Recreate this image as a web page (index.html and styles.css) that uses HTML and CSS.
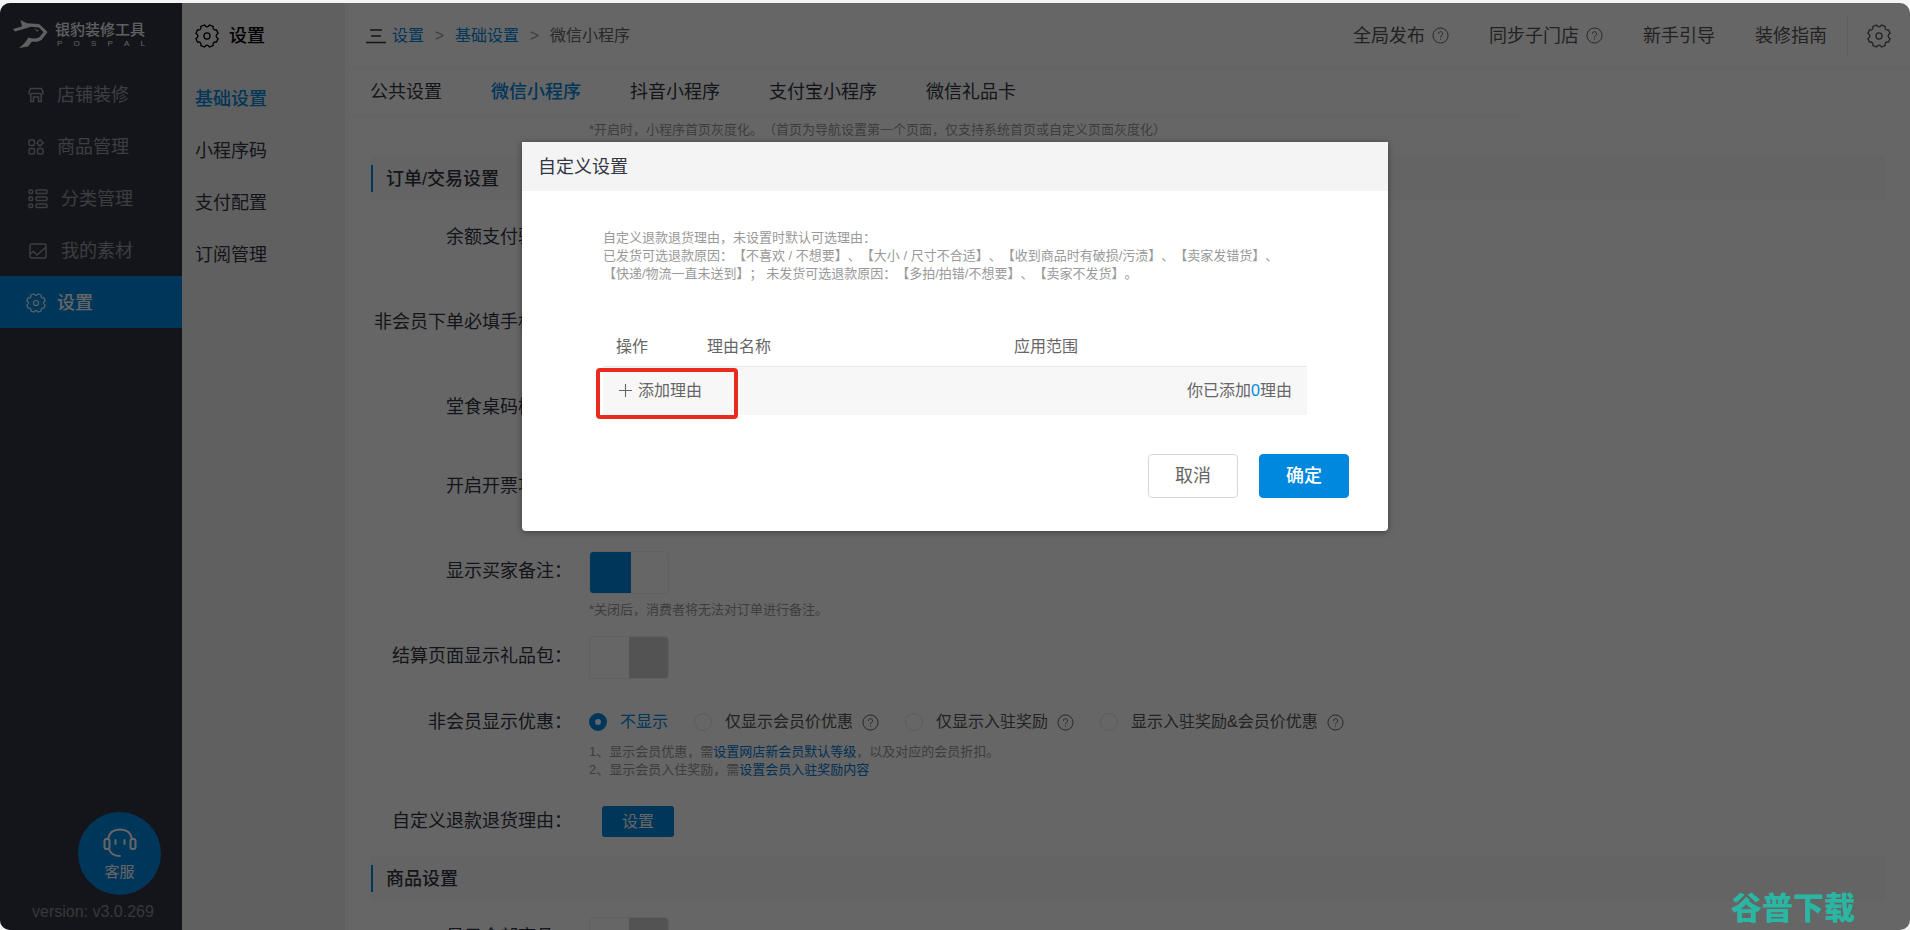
FILE: index.html
```html
<!DOCTYPE html>
<html lang="zh-CN">
<head>
<meta charset="utf-8">
<title>银豹装修工具 - 设置</title>
<link rel="stylesheet" href="styles.css">
</head>
<body>
<svg class="sprite" aria-hidden="true">
  <symbol id="gear" viewBox="1 1 22 22">
    <path d="M9.600 1.900 Q12 5.400 14.400 1.900 L17.600 3.200 Q16.900 7.100 20.800 6.400 L22.100 9.600 Q18.600 12 22.100 14.400 L20.800 17.600 Q16.900 16.900 17.600 20.800 L14.400 22.100 Q12 18.600 9.600 22.100 L6.400 20.800 Q7.100 16.900 3.200 17.600 L1.900 14.400 Q5.400 12 1.900 9.600 L3.200 6.400 Q7.100 7.100 6.400 3.200 Z"/>
    <circle cx="12" cy="12" r="2.800"/>
  </symbol>
  <symbol id="help" viewBox="0 0 18 18">
    <circle cx="9" cy="9" r="8"/>
    <path d="M6.800 7.200a2.200 2.200 0 1 1 3.400 1.800c-.8.6-1.200.9-1.200 1.900M9 12.300v1.100"/>
  </symbol>
</svg>
<div class="app">
  <nav class="sidebar" aria-label="主菜单">
    <div class="brand">
      <svg class="brand-mark" viewBox="0 0 36 30" aria-hidden="true"><path d="M1 10 L10 7.500 L8.500 1 L15 4.200 L27 5 L31 8.500 L35.500 13 L29.500 21 C26 23 22 23 20 22.500 L16 27.500 L7 29 C11 26 14 23 16.500 18.500 C21 20.500 25 19.500 27.500 18 L31.500 13.200 L27 8.500 L19 7.800 L3 12.500 Z"/><path d="M22 9.500 L26.500 11.500 L25.500 12.500 Z"/></svg>
      <div class="brand-text"><strong>银豹装修工具</strong><div class="brand-sub"><span>P</span><span>O</span><span>S</span><span>P</span><span>A</span><span>L</span></div></div>
    </div>
    <ul class="menu">
      <li><a href="#"><svg class="ico16" viewBox="0 0 16 16"><path d="M2.500 1.500h11l1.500 4c0 2.200-2 2.200-3 1H4C3 7.700 1 7.700 1 5.500zM2.800 7.500v7h2.700v-4.500h5v4.500h2.700v-7"/></svg>店铺装修</a></li>
      <li><a href="#"><svg class="ico16" viewBox="0 0 16 16"><rect x="1" y="1" width="5.500" height="5.500" rx="1.500"/><path d="M12 .8l3.200 3.100L12 7.100 8.900 3.900z"/><rect x="1" y="9.500" width="5.500" height="5.500" rx="1.500"/><rect x="9.500" y="9.500" width="5.500" height="5.500" rx="1.500"/></svg>商品管理</a></li>
      <li><a href="#"><svg class="ico20" viewBox="0 0 20 20"><rect x="1" y="1" width="3.500" height="3.500" rx="1"/><rect x="8" y="1" width="11" height="3.500" rx="1"/><rect x="1" y="8" width="3.500" height="3.500" rx="1"/><rect x="8" y="8" width="11" height="3.500" rx="1"/><rect x="1" y="15" width="3.500" height="3.500" rx="1"/><rect x="8" y="15" width="11" height="3.500" rx="1"/></svg>分类管理</a></li>
      <li><a href="#"><svg class="ico20" viewBox="0 0 20 20"><rect x="2" y="3" width="16" height="14" rx="2"/><path d="M2 13l3.500-2.500L9 14l8.500-7.500M6 6.800h.1"/></svg>我的素材</a></li>
      <li><a class="active" href="#"><svg class="ico16 wide"><use href="#gear"/></svg>设置</a></li>
    </ul>
    <a class="service" href="#">
      <svg viewBox="0 0 34 30" aria-hidden="true"><path d="M5 11C6 4.500 11 1.500 17 1.500S28 4.500 29 11"/><rect x="1.500" y="11" width="5" height="10" rx="2"/><rect x="27.500" y="11" width="5" height="10" rx="2"/><path d="M6 21c1.500 4.500 5 7 11 7M12.500 12v4M21.500 12v4"/></svg>
      <span>客服</span>
    </a>
    <div class="version">version: v3.0.269</div>
  </nav>

  <nav class="subnav" aria-label="设置菜单">
    <h1><svg class="ico24"><use href="#gear"/></svg>设置</h1>
    <a class="active" href="#">基础设置</a>
    <a href="#">小程序码</a>
    <a href="#">支付配置</a>
    <a href="#">订阅管理</a>
  </nav>

  <main class="main">
    <header class="topbar">
      <div class="crumbs">
        <svg class="burger" viewBox="0 0 20 16" aria-hidden="true"><path d="M4 2h12M5 8h10M0 14.500h20"/></svg>
        <a href="#">设置</a><span class="sep">&gt;</span><a href="#">基础设置</a><span class="sep">&gt;</span><span>微信小程序</span>
      </div>
      <div class="actions">
        <a href="#">全局发布<svg class="help"><use href="#help"/></svg></a>
        <a href="#">同步子门店<svg class="help"><use href="#help"/></svg></a>
        <a href="#">新手引导</a>
        <a href="#">装修指南</a>
        <button class="gear-btn" type="button" aria-label="系统设置"><svg class="ico24"><use href="#gear"/></svg></button>
      </div>
    </header>
    <nav class="tabs" aria-label="设置分类">
      <a href="#">公共设置</a>
      <a class="active" href="#">微信小程序</a>
      <a href="#">抖音小程序</a>
      <a href="#">支付宝小程序</a>
      <a href="#">微信礼品卡</a>
    </nav>
    <form class="settings">
      <p class="hint lead">*开启时，小程序首页灰度化。（首页为导航设置第一个页面，仅支持系统首页或自定义页面灰度化）</p>
      <h2>订单/交易设置</h2>
      <div class="row r1"><label for="s1">余额支付验证：</label><div><input class="switch" type="checkbox" id="s1"></div></div>
      <div class="row r1"><label for="s2">非会员下单必填手机号：</label><div><input class="switch" type="checkbox" id="s2"></div></div>
      <div class="row r2"><label for="s3">堂食桌码模式：</label><div><input class="switch" type="checkbox" id="s3"></div></div>
      <div class="row r1"><label for="s4">开启开票功能：</label><div><input class="switch" type="checkbox" id="s4"></div></div>
      <div class="row r1"><label for="s5">显示买家备注：</label><div><input class="switch" type="checkbox" id="s5" checked><p class="hint">*关闭后，消费者将无法对订单进行备注。</p></div></div>
      <div class="row r3"><label for="s6">结算页面显示礼品包：</label><div><input class="switch" type="checkbox" id="s6"></div></div>
      <div class="row r4" role="radiogroup" aria-labelledby="lb"><span class="label" id="lb">非会员显示优惠：</span>
        <div>
          <div class="options">
            <label><input type="radio" name="d" checked><span>不显示</span></label>
            <label><input type="radio" name="d"><span>仅显示会员价优惠</span><svg class="help"><use href="#help"/></svg></label>
            <label><input type="radio" name="d"><span>仅显示入驻奖励</span><svg class="help"><use href="#help"/></svg></label>
            <label><input type="radio" name="d"><span>显示入驻奖励&amp;会员价优惠</span><svg class="help"><use href="#help"/></svg></label>
          </div>
          <p class="hint">1、显示会员优惠，需<a href="#">设置网店新会员默认等级</a>，以及对应的会员折扣。<br>2、显示会员入住奖励，需<a href="#">设置会员入驻奖励内容</a></p>
        </div>
      </div>
      <div class="row r5"><span class="label">自定义退款退货理由：</span><div><button class="set-btn" type="button">设置</button></div></div>
      <h2>商品设置</h2>
      <div class="row r1"><label for="s7">显示全部商品：</label><div><input class="switch" type="checkbox" id="s7"></div></div>
    </form>
  </main>

  <div class="overlay">
    <section class="modal" role="dialog" aria-modal="true" aria-labelledby="mt">
      <h2 id="mt">自定义设置</h2>
      <div class="modal-body">
        <p class="note">自定义退款退货理由，未设置时默认可选理由：<br>已发货可选退款原因：【不喜欢 / 不想要】、【大小 / 尺寸不合适】、【收到商品时有破损/污渍】、【卖家发错货】、<br>【快递/物流一直未送到】； 未发货可选退款原因：【多拍/拍错/不想要】、【卖家不发货】。</p>
        <table>
          <thead><tr><th class="c1">操作</th><th class="c2">理由名称</th><th>应用范围</th></tr></thead>
          <tbody><tr><td colspan="2" class="add-cell"><button class="add" type="button"><svg viewBox="0 0 14 14" aria-hidden="true"><path d="M7 0v14M0 7h14"/></svg>添加理由</button></td><td class="count">你已添加<b>0</b>理由</td></tr></tbody>
        </table>
      </div>
      <footer><button type="button">取消</button><button class="primary" type="button">确定</button></footer>
    </section>
  </div>
  <div class="watermark">谷普下载</div>
</div>
</body>
</html>
```

FILE: styles.css
```css
*, *::before, *::after { box-sizing: border-box; }
body {
  margin: 0;
  padding-top: 3px;
  background: #f4f4f4;
  color: #333643;
  font: 18px/24px "Liberation Sans", "Noto Sans CJK SC", sans-serif;
  text-spacing-trim: space-all;
}
h1, h2, p, ul { margin: 0; padding: 0; font-weight: 400; }
a { color: inherit; text-decoration: none; }
button { font: inherit; color: inherit; cursor: pointer; }
svg { fill: none; stroke: currentColor; stroke-width: 1.5; flex: none; }
.sprite { position: absolute; width: 0; height: 0; }
.ico16 { width: 16px; height: 16px; }
.ico20 { width: 20px; height: 20px; }
.ico24 { width: 24px; height: 24px; stroke-width: 1.2; }
.ico16.wide { width: 20px; height: 20px; margin: 0 -2px; stroke-width: 1.2; }
.help { width: 17px; height: 17px; stroke-width: 1; }

.app {
  position: relative;
  display: flex;
  height: calc(100vh - 3px);
  overflow: hidden;
  border-radius: 10px;
  background: #fff;
}

/* Primary navigation */
.sidebar {
  flex: none;
  display: flex;
  flex-direction: column;
  width: 182px;
  background: #333643;
  color: #989aa1;
}
.brand { display: flex; gap: 7px; padding: 16px 0 0 12px; height: 65px; color: #f0f0f0; }
.brand-mark { width: 36px; height: 30px; fill: currentColor; stroke: none; }
.brand-text { width: 92px; font-size: 15px; line-height: 21px; white-space: nowrap; }
.brand-text strong { font-weight: 500; }
.brand-sub { display: flex; justify-content: space-between; padding: 0 2px; font-size: 8px; line-height: 8px; }
.menu { list-style: none; }
.menu a { display: flex; align-items: center; gap: 13px; height: 52px; padding: 2px 0 0 28px; }
.menu li:first-child a { margin-top: 0; }
.menu a.active { background: #0087de; color: #fff; font-weight: 500; }
.menu, .subnav a { margin-top: 0; }
.service {
  display: flex;
  flex-direction: column;
  align-items: center;
  width: 83px;
  height: 83px;
  margin: auto 0 5px 78px;
  padding-top: 16px;
  border-radius: 50%;
  background: #0087de;
  color: #fff;
  font-size: 15px;
}
.service svg { width: 34px; height: 30px; stroke-width: 2; stroke-linecap: round; }
.service span { margin-top: 2px; }
.version { padding: 0 0 6px 32px; color: #8a8b92; font-size: 16px; }

/* Secondary navigation */
.subnav { flex: none; display: flex; flex-direction: column; width: 163px; padding-left: 13px; background: #efefef; }
.subnav h1 { display: flex; align-items: center; gap: 10px; height: 65px; color: #000; font-size: 18px; font-weight: 500; }
.subnav a { height: 52px; padding-top: 18px; line-height: 26px; }
.subnav a.active { color: #0087de; font-weight: 500; }

/* Content */
.main { flex: 1; min-width: 0; display: flex; flex-direction: column; border-left: 4px solid #fafafa; }
.topbar { flex: none; display: flex; justify-content: space-between; height: 65px; padding-top: 1px; border-bottom: 1px solid #f5f5f5; }
.crumbs { display: flex; align-items: center; padding-left: 17px; font-size: 16px; color: #666; }
.crumbs a { color: #0087de; }
.burger { width: 20px; height: 16px; margin-right: 6px; color: #333; }
.sep { width: 31px; text-align: center; color: #999; }
.actions { display: flex; align-items: center; gap: 40px; color: #555; }
.actions a { display: flex; align-items: center; gap: 7px; }
.actions a:nth-child(4) { margin-right: -20px; }
.gear-btn { display: flex; padding: 8px 19px; border: 0; border-left: 1px solid #eee; background: none; }
.tabs { flex: none; display: flex; gap: 49px; width: 75%; height: 49px; padding: 12px 0 0 21px; border-bottom: 1px solid #f5f5f5; }
.tabs a.active { color: #0087de; font-weight: 500; }
.settings { flex: 1; min-height: 0; overflow: hidden; padding: 4px 25px 0 22px; }
.hint { color: #999; font-size: 13px; line-height: 18px; }
.hint a { color: #0078d4; }
.lead { padding: 0 0 17px 218px; }
.settings h2 { display: flex; align-items: center; height: 45px; background: #f9f9f9; font-size: 18px; font-weight: 500; }
.settings h2::before { content: ""; width: 2px; height: 27px; margin-right: 13px; background: #0087de; }
.row { display: grid; grid-template-columns: 201px 1fr; column-gap: 17px; min-height: 85px; padding-top: 16px; }
.row > label, .row > .label { text-align: right; line-height: 40px; }
.r2 { min-height: 79px; }
.row .hint { margin-top: 7px; }
.switch {
  appearance: none;
  display: block;
  width: 80px;
  height: 43px;
  margin: 0;
  border: 1px solid #f0f0f0;
  border-radius: 4px;
  background: linear-gradient(90deg, #fff 50%, #d0d0d0 50%);
}
.switch:checked { border-color: #f0f0f0; background: linear-gradient(90deg, #0087de 53%, #fff 53%); }
.r3 { min-height: 70px; }
.r4 { min-height: 98px; padding-top: 12px; }
.options { display: flex; gap: 26px; padding-top: 8px; font-size: 16px; color: #555; }
.options label { display: flex; align-items: center; }
.options span { margin-left: 13px; }
.options .help { margin-left: 9px; }
.options input { appearance: none; width: 18px; height: 18px; margin: 0; border: 1px solid #e4e4e4; border-radius: 50%; background: #fff; }
.options input:checked { border: 6px solid #0087de; }
.options input:checked + span { color: #0087de; }
.row .options + .hint { margin-top: 9px; }
.r5 { min-height: 68px; padding-top: 13px; }
.set-btn { display: block; width: 72px; height: 31px; margin: 5px 0 0 13px; padding: 0; border: 0; border-radius: 3px; background: #0087de; color: #fff; font-size: 16px; }

/* Dialog */
.overlay {
  position: absolute;
  inset: 0;
  display: flex;
  justify-content: center;
  align-items: flex-start;
  padding-top: 139px;
  background: rgba(0, 0, 0, .6);
}
.modal { width: 866px; max-width: 96%; border-radius: 0 0 4px 4px; overflow: hidden; background: #fff; box-shadow: 0 1px 6px rgba(0, 0, 0, .4); }
.modal h2 { height: 49px; padding: 13px 16px 0; background: #f4f4f4; font-size: 18px; }
.modal-body { padding: 38px 81px 0; color: #666; font-size: 16px; }
.note { color: #999; font-size: 13px; line-height: 18px; white-space: nowrap; }
.modal table { width: 100%; margin-top: 44px; border-collapse: collapse; table-layout: fixed; }
.modal th { height: 39px; padding: 2px 0 0 13px; text-align: left; font-weight: 400; border-bottom: 1px solid #e8e8e8; }
.c1 { width: 91px; }
.c2 { width: 307px; }
.modal td { height: 49px; padding: 0; background: #f7f7f7; }
.add-cell { position: relative; }
.add-cell::after { content: ""; position: absolute; left: -7px; top: 1px; width: 142px; height: 51px; border: 4px solid #e82a1f; border-radius: 4px; pointer-events: none; }
.add { display: flex; align-items: center; gap: 6px; padding: 0 0 0 16px; border: 0; background: none; }
.add svg { width: 13px; height: 13px; stroke-width: 1.2; }
.modal td.count { padding-right: 15px; text-align: right; }
.count b { font-weight: 400; color: #0087de; }
.modal footer { display: flex; justify-content: flex-end; gap: 21px; padding: 39px 39px 33px; }
.modal footer button { width: 90px; height: 44px; padding: 0; border: 1px solid #d8d8d8; border-radius: 4px; background: #fff; color: #666; }
.modal footer .primary { border-color: #0087de; background: #0087de; color: #fff; font-weight: 500; }
.watermark { position: absolute; right: 55px; bottom: 3px; color: #2bb5a3; font-size: 31px; font-weight: 900; line-height: 36px; }
```
